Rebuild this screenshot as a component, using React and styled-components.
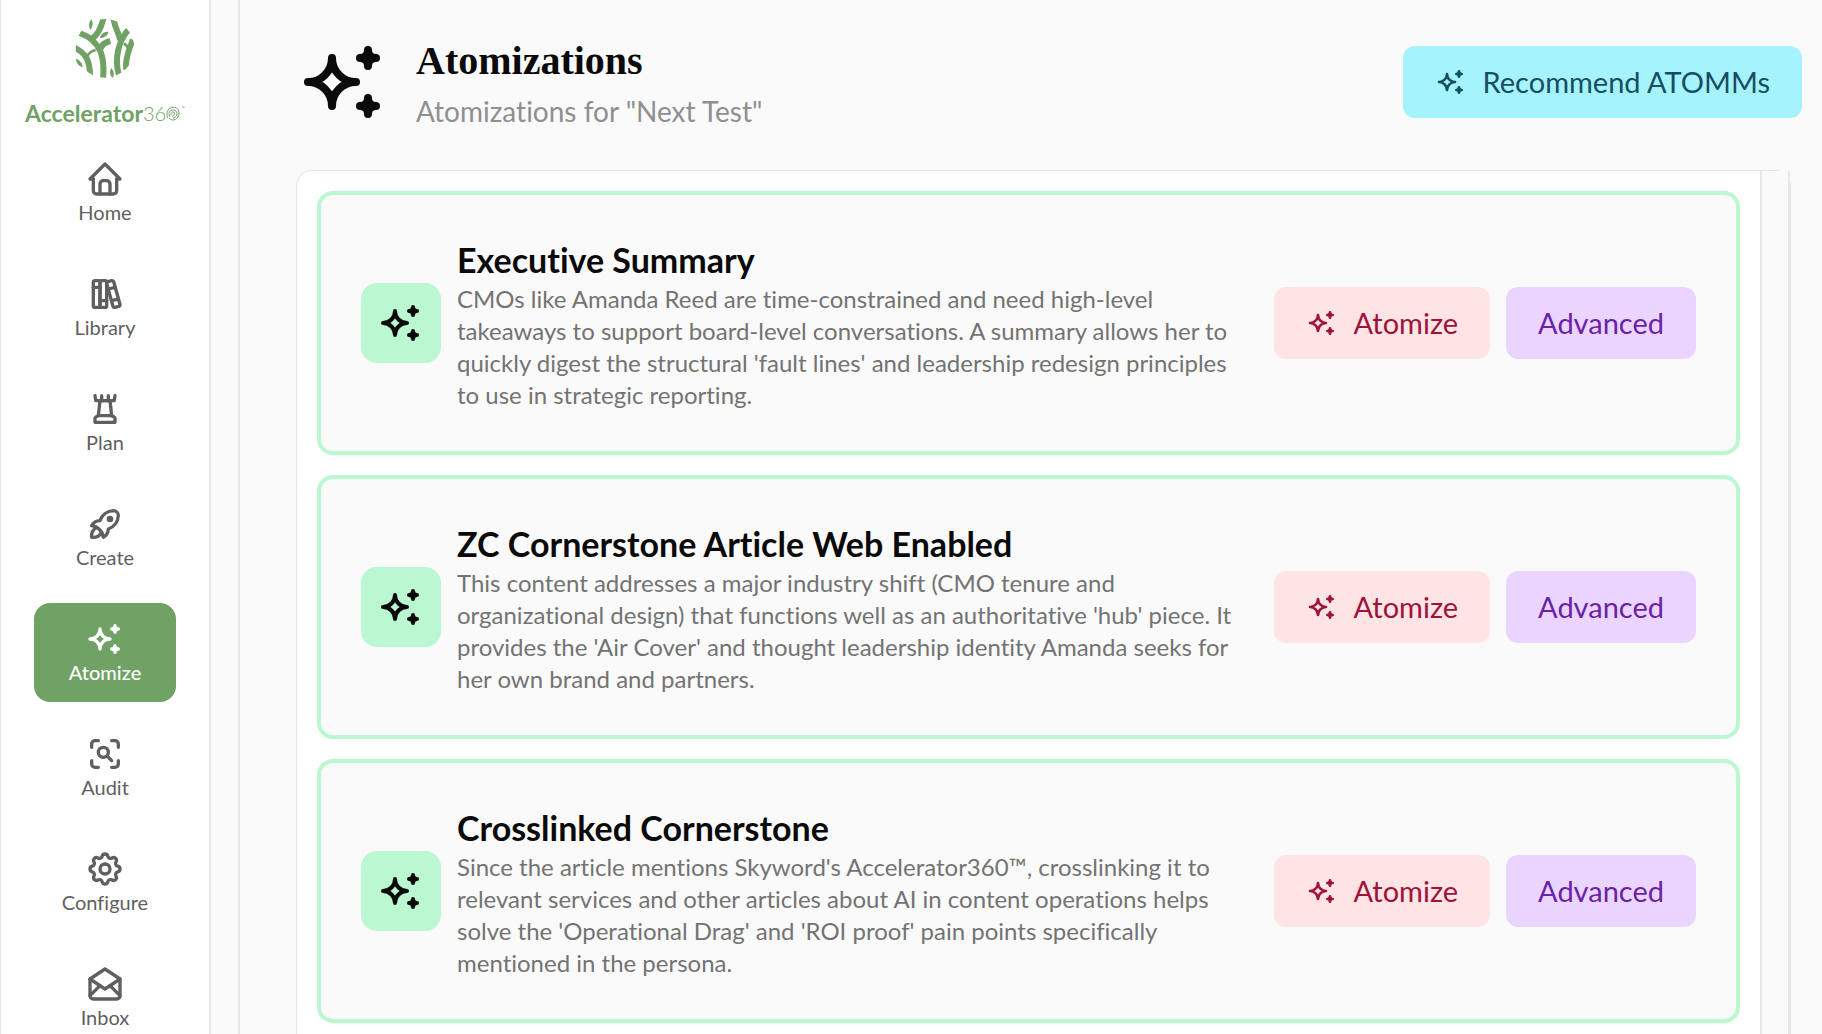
import styled, { createGlobalStyle } from "styled-components"
import { TbBooks, TbChessRook, TbHome, TbMailOpened, TbRocket, TbSettings, TbSparkles, TbZoomScan } from "react-icons/tb"


const GlobalStyle = createGlobalStyle`
  * {
    box-sizing: border-box;
    margin: 0;
  }

  body {
    background: #fafafa;
    color: #0a0a0a;
    font-family: Lato, "Open Sans", sans-serif;
    font-variant-ligatures: none;
    overflow: hidden;
  }
`

const Wrapper = styled.div`
  display: flex;
  height: 100vh;
  overflow: hidden;
`

const Sidebar = styled.aside`
  display: flex;
  flex: none;
  flex-direction: column;
  align-items: center;
  width: 211px;
  padding-top: 18px;
  background: white;
  border-left: 1px solid #e5e5e5;
  border-right: 2px solid #e8e8e8;
`

const Brand = styled.a`
  display: flex;
  flex: none;
  flex-direction: column;
  align-items: center;
  gap: 20px;
  height: 125px;
  color: #6fa264;
  text-decoration: none;
`

const Wordmark = styled.span`
  display: flex;
  align-items: center;
  font-size: 23px;
  line-height: 26px;
  font-weight: 700;
`

const Thin = styled.span`
  font-size: 20px;
  font-weight: 300;
`

const TradeMark = styled.sup`
  align-self: flex-start;
  font-size: 5px;
  font-weight: 400;
  line-height: 16px;
`

const Nav = styled.nav`
  display: flex;
  flex-direction: column;
  gap: 16px;
`

const NavItem = styled.a`
  display: flex;
  flex: none;
  flex-direction: column;
  align-items: center;
  width: 142px;
  padding: 16px 0;
  border-radius: 16px;
  background: ${({ $active }) => ($active ? "#6fa264" : "transparent")};
  color: ${({ $active }) => ($active ? "white" : "#5f5f5f")};
  font-size: 20px;
  font-weight: ${({ $active }) => ($active ? 500 : 400)};
  line-height: 27px;
  text-decoration: none;
`

const Track = styled.div`
  flex: none;
  width: 29px;
  background: #fafafa;
  border-right: 2px solid #e8e8e8;
`

const Main = styled.main`
  display: flex;
  flex: 1;
  flex-direction: column;
  min-width: 0;
  padding: 34px 20px 0 56px;
`

const Header = styled.header`
  display: flex;
  align-items: center;
  gap: 24px;
  height: 96px;
  margin-bottom: 40px;
`

const Heading = styled.div`
  flex: 1;
  padding-top: 10px;
`

const Title = styled.h1`
  font-family: "Liberation Serif", serif;
  font-size: 40px;
  font-weight: 700;
  line-height: 48px;
`

const Subtitle = styled.p`
  color: #8f8f8f;
  font-size: 28px;
  line-height: 52px;
`

const tones = {
  cyan: { background: "#a5f3fc", color: "#164e63" },
  rose: { background: "#ffe4e6", color: "#9f1239" },
  purple: { background: "#e9d5ff", color: "#6b21a8" },
}

const Button = styled.button`
  display: flex;
  flex: none;
  align-items: center;
  gap: 16px;
  height: 72px;
  padding: 0 32px;
  border: 0;
  border-radius: 12px;
  background: ${({ $tone }) => tones[$tone].background};
  color: ${({ $tone }) => tones[$tone].color};
  font-family: inherit;
  font-size: 29px;
  line-height: 40px;
  cursor: pointer;
`

// no overflow clipping here, the track is meant to square off the right corner
const Panel = styled.section`
  display: flex;
  flex: 1;
  min-height: 0;
  margin-right: 11px;
  background: white;
  background-clip: padding-box;
  border: 1px solid #e5e5e5;
  border-bottom: 0;
  border-radius: 16px 16px 0 0;
`

const List = styled.ul`
  display: flex;
  flex: 1;
  flex-direction: column;
  gap: 20px;
  min-width: 0;
  padding: 20px;
  list-style: none;
`

const PanelTrack = styled(Track)`
  width: 30px;
  border-left: 2px solid #e8e8e8;
`

const Card = styled.li`
  display: flex;
  flex: none;
  align-items: center;
  gap: 16px;
  padding: 40px;
  background: #fafafa;
  border: 4px solid #bbf7d0;
  border-radius: 16px;
`

const Tile = styled.div`
  display: grid;
  flex: none;
  place-items: center;
  width: 80px;
  height: 80px;
  border-radius: 16px;
  background: #bbf7d0;
`

const CardBody = styled.div`
  flex: 1;
  min-width: 0;
  padding-right: 10px;
`

const CardTitle = styled.h2`
  padding-top: 2px;
  font-size: 34px;
  font-weight: 700;
  line-height: 46px;
`

const CardText = styled.p`
  color: #737373;
  font-size: 24px;
  line-height: 32px;
`

const navItems = [
  { label: "Home", icon: TbHome },
  { label: "Library", icon: TbBooks },
  { label: "Plan", icon: TbChessRook },
  { label: "Create", icon: TbRocket },
  { label: "Atomize", icon: TbSparkles, active: true },
  { label: "Audit", icon: TbZoomScan },
  { label: "Configure", icon: TbSettings },
  { label: "Inbox", icon: TbMailOpened },
]

const cards = [
  {
    title: "Executive Summary",
    text: "CMOs like Amanda Reed are time-constrained and need high-level takeaways to support board-level conversations. A summary allows her to quickly digest the structural 'fault lines' and leadership redesign principles to use in strategic reporting.",
  },
  {
    title: "ZC Cornerstone Article Web Enabled",
    text: "This content addresses a major industry shift (CMO tenure and organizational design) that functions well as an authoritative 'hub' piece. It provides the 'Air Cover' and thought leadership identity Amanda seeks for her own brand and partners.",
  },
  {
    title: "Crosslinked Cornerstone",
    text: "Since the article mentions Skyword's Accelerator360™, crosslinking it to relevant services and other articles about AI in content operations helps solve the 'Operational Drag' and 'ROI proof' pain points specifically mentioned in the persona.",
  },
]

const TreeLogo = () => (
  <svg width="60" height="62" viewBox="20 20 180 184" fill="none" stroke="currentColor" strokeWidth="18">
    <clipPath id="crown">
      <circle cx="110" cy="110" r="88" />
    </clipPath>
    <g clipPath="url(#crown)">
      <path d="M104 202C110 140 100 88 34 64" />
      <path d="M72 80C88 70 98 50 106 18" />
      <path d="M96 112C100 99 110 92 126 88" />
      <path d="M152 190C138 145 148 90 182 52" />
      <path d="M156 86C152 64 140 52 135 18" />
      <path d="M174 174C170 145 180 115 194 84" />
      <path d="M182 116C180 107 175 101 167 95" strokeWidth="8" />
      <path d="M65 194C65 150 55 125 18 108" />
      <path d="M56 134C62 123 70 118 82 115" strokeWidth="8" />
    </g>
    <g fill="currentColor" stroke="none">
      <path d="M69 23C60 34 61 47 66 54C74 45 75 32 69 23Z" />
      <path d="M94 79C98 65 108 60 121 60C117 73 107 79 94 79Z" />
      <path d="M23 141C34 145 42 154 43 166C31 164 23 154 23 141Z" />
      <path d="M129 169C138 179 138 190 133 199C123 190 124 178 129 169Z" />
    </g>
  </svg>
)

const Fingerprint = () => (
  <svg width="15" height="15" viewBox="0 0 15 15" fill="none" stroke="currentColor">
    <path d="M2 12C0 9 1 4 4 2C8 0 13 2 13 7C13 11 10 14 7 14C5 14 4 13 3 12" />
    <path d="M4 11C2 8 3 4 7 4C10 4 11 6 11 8C11 10 9 12 7 12" />
    <path d="M5 9C5 7 6 6 7 6C9 6 9 8 8 9C8 10 7 10 6 10" />
  </svg>
)

const App = () => {
  return <Wrapper>
    <GlobalStyle />
    <Sidebar>
      <Brand href="#">
        <TreeLogo />
        <Wordmark>Accelerator<Thin>36</Thin><Fingerprint /><TradeMark>™</TradeMark></Wordmark>
      </Brand>
      <Nav>
        {navItems.map(({ label, icon: Icon, active }) => (
          <NavItem key={label} href="#" $active={active}>
            <Icon size={40} />
            {label}
          </NavItem>
        ))}
      </Nav>
    </Sidebar>
    <Track />
    <Main>
      <Header>
        <TbSparkles size={96} />
        <Heading>
          <Title>Atomizations</Title>
          <Subtitle>Atomizations for "Next Test"</Subtitle>
        </Heading>
        <Button $tone="cyan"><TbSparkles size={32} />Recommend ATOMMs</Button>
      </Header>
      <Panel>
        <List>
          {cards.map(({ title, text }) => (
            <Card key={title}>
              <Tile><TbSparkles size={48} /></Tile>
              <CardBody>
                <CardTitle>{title}</CardTitle>
                <CardText>{text}</CardText>
              </CardBody>
              <Button $tone="rose"><TbSparkles size={32} />Atomize</Button>
              <Button $tone="purple">Advanced</Button>
            </Card>
          ))}
        </List>
        <PanelTrack />
      </Panel>
    </Main>
  </Wrapper>
}

export default App
